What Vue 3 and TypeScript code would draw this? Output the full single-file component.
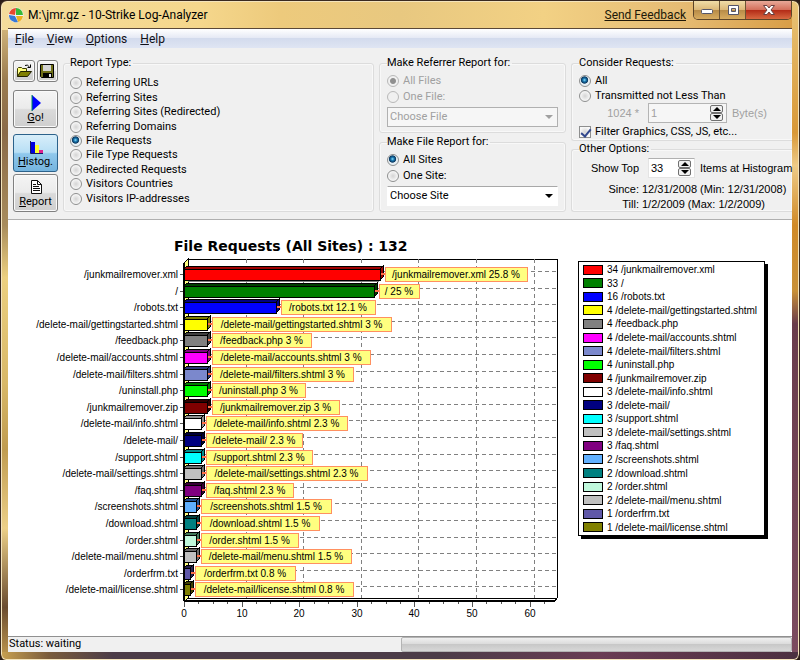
<script setup lang="ts">
import { ref } from 'vue'

interface Entry {
  path: string
  hits: number
  percent: string
  fill: string
  shade: string
  tagWidth: number
}

const entries: Entry[] = [
  { path: '/junkmailremover.xml', hits: 34, percent: '25.8', fill: '#ff0000', shade: '#a00000', tagWidth: 142 },
  { path: '/', hits: 33, percent: '25', fill: '#008000', shade: '#004000', tagWidth: 40 },
  { path: '/robots.txt', hits: 16, percent: '12.1', fill: '#0000ff', shade: '#000080', tagWidth: 94 },
  { path: '/delete-mail/gettingstarted.shtml', hits: 4, percent: '3', fill: '#ffff00', shade: '#808000', tagWidth: 179 },
  { path: '/feedback.php', hits: 4, percent: '3', fill: '#808080', shade: '#404040', tagWidth: 99 },
  { path: '/delete-mail/accounts.shtml', hits: 4, percent: '3', fill: '#ff00ff', shade: '#800080', tagWidth: 158 },
  { path: '/delete-mail/filters.shtml', hits: 4, percent: '3', fill: '#7b88cc', shade: '#2c3878', tagWidth: 141 },
  { path: '/uninstall.php', hits: 4, percent: '3', fill: '#00ff00', shade: '#008000', tagWidth: 93 },
  { path: '/junkmailremover.zip', hits: 4, percent: '3', fill: '#800000', shade: '#300000', tagWidth: 127 },
  { path: '/delete-mail/info.shtml', hits: 3, percent: '2.3', fill: '#ffffff', shade: '#909090', tagWidth: 141 },
  { path: '/delete-mail/', hits: 3, percent: '2.3', fill: '#000080', shade: '#000038', tagWidth: 96 },
  { path: '/support.shtml', hits: 3, percent: '2.3', fill: '#00ffff', shade: '#008c8c', tagWidth: 106 },
  { path: '/delete-mail/settings.shtml', hits: 3, percent: '2.3', fill: '#c0c0c0', shade: '#707070', tagWidth: 161 },
  { path: '/faq.shtml', hits: 3, percent: '2.3', fill: '#800080', shade: '#380038', tagWidth: 87 },
  { path: '/screenshots.shtml', hits: 2, percent: '1.5', fill: '#60b0ff', shade: '#204f90', tagWidth: 130 },
  { path: '/download.shtml', hits: 2, percent: '1.5', fill: '#008080', shade: '#004040', tagWidth: 118 },
  { path: '/order.shtml', hits: 2, percent: '1.5', fill: '#c0f8dc', shade: '#407858', tagWidth: 97 },
  { path: '/delete-mail/menu.shtml', hits: 2, percent: '1.5', fill: '#c0c0c0', shade: '#686868', tagWidth: 150 },
  { path: '/orderfrm.txt', hits: 1, percent: '0.8', fill: '#6058a8', shade: '#282050', tagWidth: 100 },
  { path: '/delete-mail/license.shtml', hits: 1, percent: '0.8', fill: '#808000', shade: '#404000', tagWidth: 158 },
]

const axisX = 176
const unit = 5.76
const firstRow = 54
const rowStep = 16.6

const bars = entries.map((e, i) => {
  const y = Math.round(firstRow + i * rowStep)
  const end = Math.round(axisX + e.hits * unit)
  return {
    ...e,
    y,
    end,
    top: `${axisX},${y - 5} ${axisX + 3},${y - 8} ${end + 3},${y - 8} ${end},${y - 5}`,
    side: `${end},${y - 5} ${end + 3},${y - 8} ${end + 3},${y + 3} ${end},${y + 6}`,
  }
})

const majors = [0, 10, 20, 30, 40, 50, 60].map((v) => ({ v, x: Math.round(axisX + v * unit) }))
const minors = Array.from({ length: 26 }, (_, i) => i)
  .filter((i) => i % 4 !== 0)
  .map((i) => Math.round(axisX + i * 2.5 * unit))

const reportTypes = [
  'Referring URLs',
  'Referring Sites',
  'Referring Sites (Redirected)',
  'Referring Domains',
  'File Requests',
  'File Type Requests',
  'Redirected Requests',
  'Visitors Countries',
  'Visitors IP-addresses',
]
const menus = ['File', 'View', 'Options', 'Help']

const reportType = ref('File Requests')
const referrerScope = ref('all')
const fileScope = ref('all')
const requestScope = ref('all')
const filterGraphics = ref(true)
const minBytes = ref(1)
const topCount = ref(33)
</script>

<template>
  <div class="window">
    <header class="titlebar">
      <svg class="logo" viewBox="0 0 16 16" aria-hidden="true">
        <circle cx="8" cy="8" r="7.5" fill="#f4f4f4" />
        <path d="M7 8L8 1A7 7 0 0 0 1 7Z" fill="#e84830" />
        <path d="M8 8V1A7 7 0 0 1 15 8Z" fill="#38b838" />
        <path d="M1 8L7 9L10 15A7 7 0 0 1 1 8Z" fill="#3878d8" />
        <path d="M8 9H15A7 7 0 0 1 10 15Z" fill="#f0b020" />
      </svg>
      <h1>M:\jmr.gz - 10-Strike Log-Analyzer</h1>
      <a class="feedback" href="#feedback">Send Feedback</a>
      <div class="captions">
        <button type="button" aria-label="Minimize">
          <svg viewBox="0 0 14 12"><rect x="1.5" y="5.5" width="11" height="4" rx="1" fill="#fff" stroke="#555568" /></svg>
        </button>
        <button type="button" aria-label="Maximize">
          <svg viewBox="0 0 14 12"><path d="M2.500 1.500h10v9h-10zM5.500 4.500v3h4v-3z" fill="#fff" fill-rule="evenodd" stroke="#555568" /></svg>
        </button>
        <button type="button" class="close" aria-label="Close">
          <svg viewBox="0 0 14 12"><path d="M1.500 1.500h3.500l2 2.500 2-2.500h3.500L9 6l3.500 4.500H9L7 8l-2 2.500H1.500L5 6z" fill="#fff" stroke="#6a4040" /></svg>
        </button>
      </div>
    </header>

    <div class="client">
      <nav class="menubar">
        <button v-for="m in menus" :key="m" type="button"><u>{{ m[0] }}</u>{{ m.slice(1) }}</button>
      </nav>

      <section class="toolbar">
        <div class="actions">
          <div class="pair">
            <button type="button" aria-label="Open">
              <svg viewBox="0 0 16 16">
                <path d="M1.500 13.500V5.500l1-1h3l1 1h4v3" fill="#ffff80" stroke="#3a3a00" />
                <path d="M1.500 13.500l3-5h11l-4 5z" fill="#808000" stroke="#202000" />
                <path d="M9 2.500q2.500-1.500 4.500 1.500M14.500 1.500v3h-3" fill="none" stroke="#000" />
              </svg>
            </button>
            <button type="button" aria-label="Save">
              <svg viewBox="0 0 16 16">
                <path d="M1.500 1.500h13v13h-12l-1-1z" fill="#707018" stroke="#000" />
                <rect x="4" y="2" width="8" height="6" fill="#d4d4d4" />
                <rect x="4" y="10" width="9" height="4" fill="#000" />
                <rect x="10" y="11" width="2" height="3" fill="#e8e8e8" />
              </svg>
            </button>
          </div>
          <button type="button" class="big go">
            <svg viewBox="0 0 16 16"><path d="M4 0v16l9-8z" fill="#0000ff" /><path d="M4 0v16" stroke="#009050" /></svg>
            <span><u>G</u>o!</span>
          </button>
          <button type="button" class="big active">
            <svg viewBox="0 0 16 16">
              <rect x="3" y="3" width="4" height="11" fill="#0000e0" />
              <rect x="7" y="6" width="4" height="8" fill="#ffff30" />
              <rect x="11" y="11" width="4" height="3" fill="#e02090" />
              <path d="M2.500 2v12.500H15" fill="none" stroke="#181860" />
            </svg>
            <span><u>H</u>istog.</span>
          </button>
          <button type="button" class="big">
            <svg viewBox="0 0 16 16">
              <path d="M3.500 1.500h6l4 4v9h-10z" fill="#fff" stroke="#111" />
              <path d="M9.500 1.500v4h4M5 5.500h3M5 7.500h6M5 9.500h7M5 11.500h7" fill="none" stroke="#111" />
            </svg>
            <span><u>R</u>eport</span>
          </button>
        </div>

        <fieldset class="types">
          <legend>Report Type:</legend>
          <label v-for="t in reportTypes" :key="t" class="option">
            <input v-model="reportType" type="radio" name="type" :value="t" />{{ t }}
          </label>
        </fieldset>

        <div class="column">
          <fieldset class="choice">
            <legend>Make Referrer Report for:</legend>
            <label class="option off"><input v-model="referrerScope" type="radio" name="referrer" value="all" disabled />All Files</label>
            <label class="option off"><input v-model="referrerScope" type="radio" name="referrer" value="one" disabled />One File:</label>
            <div class="combo off">
              <select aria-label="File" disabled><option>Choose File</option></select>
              <svg viewBox="0 0 8 4"><path d="M0 0h8L4 4z" fill="currentColor" /></svg>
            </div>
          </fieldset>
          <fieldset class="choice">
            <legend>Make File Report for:</legend>
            <label class="option"><input v-model="fileScope" type="radio" name="file" value="all" />All Sites</label>
            <label class="option"><input v-model="fileScope" type="radio" name="file" value="one" />One Site:</label>
            <div class="combo">
              <select aria-label="Site"><option>Choose Site</option></select>
              <svg viewBox="0 0 8 4"><path d="M0 0h8L4 4z" fill="currentColor" /></svg>
            </div>
          </fieldset>
        </div>

        <div class="column last">
          <fieldset class="requests">
            <legend>Consider Requests:</legend>
            <label class="option"><input v-model="requestScope" type="radio" name="requests" value="all" />All</label>
            <label class="option"><input v-model="requestScope" type="radio" name="requests" value="min" />Transmitted not Less Than</label>
            <div class="line off">
              <label class="lead" for="bytes">1024 *</label>
              <div class="spin wide">
                <input id="bytes" v-model="minBytes" type="number" disabled />
                <span class="steps">
                  <button type="button" aria-label="More bytes" disabled><svg viewBox="0 0 8 4"><path d="M4 0l4 4H0z" /></svg></button>
                  <button type="button" aria-label="Fewer bytes" disabled><svg viewBox="0 0 8 4"><path d="M0 0h8L4 4z" /></svg></button>
                </span>
              </div>
              <span>Byte(s)</span>
            </div>
            <label class="option check"><input v-model="filterGraphics" type="checkbox" />Filter Graphics, CSS, JS, etc...</label>
          </fieldset>
          <fieldset class="others">
            <legend>Other Options:</legend>
            <div class="line">
              <label class="lead" for="top">Show Top</label>
              <div class="spin">
                <input id="top" v-model="topCount" type="number" />
                <span class="steps">
                  <button type="button" aria-label="More items" @click="topCount++"><svg viewBox="0 0 8 4"><path d="M4 0l4 4H0z" /></svg></button>
                  <button type="button" aria-label="Fewer items" @click="topCount--"><svg viewBox="0 0 8 4"><path d="M0 0h8L4 4z" /></svg></button>
                </span>
              </div>
              <span>Items at Histogram</span>
            </div>
            <dl class="dates">
              <dt>Since:</dt><dd>12/31/2008 (Min: 12/31/2008)</dd>
              <dt>Till:</dt><dd>1/2/2009 (Max: 1/2/2009)</dd>
            </dl>
          </fieldset>
        </div>
      </section>

      <main class="report">
        <svg class="chart" viewBox="0 0 570 416" role="img" aria-label="File requests histogram">
          <text class="heading" x="166" y="31">File Requests (All Sites) : 132</text>
          <g shape-rendering="crispEdges">
            <path d="M180 39H549V378" fill="none" stroke="#000" />
            <g stroke="#808080" stroke-dasharray="4 3">
              <path v-for="b in bars" :key="b.path" :d="`M180 ${b.y - 3}H549`" />
              <path v-for="m in majors.slice(1)" :key="m.v" :d="`M${m.x + 4} 39V378`" />
            </g>
            <path d="M176 43l4-4V378l-4 4z" fill="#ffff80" stroke="#000" />
            <path d="M176 43V381M176 381H547" fill="none" stroke="#000" stroke-width="2" />
            <path d="M180 378H549L547 381" fill="none" stroke="#000" />
            <path d="M180 61H371" stroke="#808080" stroke-width="2" />
            <g stroke="#555">
              <path v-for="b in bars" :key="b.path" :d="`M172 ${b.y}h3`" />
              <path v-for="m in majors" :key="m.v" :d="`M${m.x} 382v5`" />
              <path v-for="x in minors" :key="x" :d="`M${x} 382v2`" />
            </g>
          </g>
          <text v-for="m in majors" :key="m.v" class="tick" :x="m.x" y="397">{{ m.v }}</text>
          <g v-for="b in bars" :key="b.path">
            <text class="name" x="170" :y="b.y + 4">{{ b.path }}</text>
            <g stroke="#000" shape-rendering="crispEdges">
              <polygon :points="b.top" :fill="b.shade" />
              <polygon :points="b.side" :fill="b.shade" />
              <rect :x="axisX" :y="b.y - 5" :width="b.end - axisX" height="11" :fill="b.fill" />
            </g>
            <path :d="`M${b.end + 1} ${b.y}h4`" stroke="#ff7048" stroke-width="2" />
            <rect :x="b.end + 5" :y="b.y - 7" :width="b.tagWidth" height="14" fill="#ffff80" stroke="#ff9060" shape-rendering="crispEdges" />
            <text class="tick" :x="b.end + 5 + b.tagWidth / 2" :y="b.y + 4">{{ b.path }} {{ b.percent }} %</text>
          </g>
        </svg>
        <ul class="key">
          <li v-for="e in entries" :key="e.path">
            <span class="swatch" :style="{ backgroundColor: e.fill }"></span>{{ e.hits }} {{ e.path }}
          </li>
        </ul>
      </main>

      <footer class="status">
        <span>Status: waiting</span>
        <span class="gauge"></span>
      </footer>
    </div>
  </div>
</template>

<style>
html,
body {
  margin: 0;
  background: #2a1c18;
}
</style>

<style scoped>
* {
  box-sizing: border-box;
}

.window {
  display: flex;
  flex-direction: column;
  min-height: 100vh;
  padding: 0 7px 8px;
  border: 1px solid #3a2a20;
  border-width: 1px 1px 0;
  border-radius: 7px 7px 6px 6px;
  box-shadow: inset 0 0 0 1px #f4e4bc;
  background:
    linear-gradient(90deg, #c8a050 0, #7a5c3c 6%, #4c3c48 14%, #4c3c48 55%, #6a3c54 75%, #4c3040) bottom / 100% 8px no-repeat,
    linear-gradient(#e8c478 0, #d89838 20%, #eecb88 25%, #d08a28 34%, #c89038 44%, #6a3c4c 49%, #7c4c60) right / 7px 100% no-repeat,
    linear-gradient(90deg, #f4dc9c, #f5d78c 25%, #edca7c 35%, #e8c880 50%, #f2d184 68%, #e6bc74 85%, #d89c44) top / 100% 29px no-repeat,
    linear-gradient(#ecd090 0, #9a7c50 12%, #8a6a48 20%, #a88c5c 34%, #ecd080 42%, #d8b868 58%, #c09c50 68%, #ecd088 80%, #6a4c30 92%, #c49c50);
  font: 11px/14px Roboto, "Liberation Sans", Arial, sans-serif;
  color: #000;
}

.titlebar {
  display: flex;
  align-items: center;
  height: 27px;
  font-size: 12px;
}

.logo {
  width: 16px;
  height: 16px;
}

h1 {
  flex: 1;
  margin: 0 0 0 4px;
  font: inherit;
}

.feedback {
  margin-right: 7px;
  color: #201808;
}

.captions {
  display: flex;
  align-self: flex-start;
  border: 1px solid #5c4428;
  border-top: 0;
  border-radius: 0 0 5px 5px;
  overflow: hidden;
}

.captions button {
  display: grid;
  place-items: center;
  width: 26px;
  height: 18px;
  padding: 0;
  border: 0;
  border-right: 1px solid #6c5434;
  background: linear-gradient(#f0dca8, #dcb878 48%, #b88c48 52%, #d8ac60);
}

.captions .close {
  width: 45px;
  border-right: 0;
  background: linear-gradient(#e8a898, #d4705c 48%, #b42c18 52%, #d86840);
}

.captions svg {
  width: 14px;
  height: 12px;
}

.client {
  display: flex;
  flex: 1;
  flex-direction: column;
  border-top: 1px solid #5a4838;
  background: #fff;
}

.menubar {
  display: flex;
  gap: 13px;
  height: 19px;
  padding: 0 7px;
  background: linear-gradient(#fff, #e6eaf5 45%, #d3dbed 50%, #dfe5f3);
}

.menubar button {
  padding: 0;
  border: 0;
  background: none;
  font: inherit;
  font-size: 12px;
  color: #101018;
}

.toolbar {
  display: grid;
  grid-template-columns: 45px minmax(180px, 1fr) 187px 221px;
  gap: 5px;
  padding: 8px 0 7px 5px;
  border-bottom: 1px solid #b0b0b0;
  background: #f0f0f0;
}

.actions {
  display: flex;
  flex-direction: column;
  gap: 2px;
  padding-top: 4px;
}

.pair {
  display: grid;
  grid-template-columns: 1fr 1fr;
  gap: 2px;
  height: 22px;
  margin-bottom: 6px;
}

.actions button {
  display: flex;
  flex-direction: column;
  align-items: center;
  justify-content: center;
  padding: 0;
  border: 1px solid #808080;
  border-radius: 3px;
  background: linear-gradient(#f4f4f4, #ebebeb 48%, #dadada 52%, #cfcfcf);
  box-shadow: inset 0 0 0 1px #fafafa;
  font: inherit;
}

.actions .big {
  height: 38px;
  padding-top: 2px;
}

.actions .go {
  margin-bottom: 4px;
}

.actions svg {
  width: 16px;
  height: 16px;
}

.actions .active {
  border-color: #2c628b;
  background: linear-gradient(#d8eefa, #b8dff5 48%, #90c8ec 52%, #74b4de);
  box-shadow: none;
}

fieldset {
  display: flex;
  flex-direction: column;
  min-width: 0;
  margin: 0;
  padding: 0 6px;
  border: 1px solid #dcdcdc;
  border-radius: 3px;
  box-shadow: inset 0 0 0 1px #f8f8f8;
}

legend {
  height: 14px;
  padding: 0 2px 0 0;
}

.types {
  padding: 6px 6px 5px;
}

.types .option {
  flex: 1;
}

.column {
  display: flex;
  flex-direction: column;
  justify-content: space-between;
}

.option {
  display: flex;
  align-items: center;
  gap: 4px;
}

input[type='radio'],
input[type='checkbox'] {
  appearance: none;
  flex: none;
  width: 12px;
  height: 12px;
  margin: 0;
  border: 1px solid #8e8f8f;
  border-radius: 50%;
  background: radial-gradient(circle, #d4d4d4, #f8f8f8 70%);
}

input[type='radio']:checked {
  background: radial-gradient(circle at 45% 40%, #8fe0fc 0, #1a78b0 20%, #0c3860 40%, #e8f0f4 50%);
}

input[type='radio']:disabled {
  border-color: #b8b8b8;
  background: #f0f0f0;
}

input[type='radio']:checked:disabled {
  background: radial-gradient(circle, #909090 35%, #f0f0f0 50%);
}

input[type='checkbox'] {
  border-radius: 0;
}

input[type='checkbox']:checked::before {
  content: '';
  display: block;
  width: 4px;
  height: 8px;
  margin-left: 3px;
  border: solid #31478c;
  border-width: 0 2px 2px 0;
  transform: rotate(40deg);
}

.off {
  color: #a0a0a0;
}

.choice {
  height: 77px;
  padding: 3px 7px 4px;
}

.choice .option {
  height: 16px;
}

.combo {
  display: grid;
  grid-template-columns: 1fr 13px;
  align-items: center;
  height: 20px;
  margin-top: 2px;
}

.combo select {
  grid-area: 1 / 1 / 2 / 3;
  appearance: none;
  width: 100%;
  height: 20px;
  padding: 0 2px;
  border: 1px solid #fff;
  border-top-color: #a8a8a8;
  border-radius: 0;
  background: #fff;
  font: inherit;
  color: inherit;
  opacity: 1;
}

.combo.off select {
  border-color: #b0b0b0;
  background: #f6f6f6;
}

.combo svg {
  grid-area: 1 / 2;
  width: 8px;
  height: 4px;
  pointer-events: none;
}

.last fieldset {
  border-right: 0;
  border-radius: 3px 0 0 3px;
}

.requests {
  height: 85px;
  padding: 3px 0 0 7px;
}

.requests .option {
  height: 15px;
}

.requests .check {
  height: 14px;
  margin-top: 2px;
}

.line,
.dates {
  font-family: "Liberation Sans", Arial, sans-serif;
  white-space: nowrap;
}

.line {
  display: grid;
  grid-template-columns: 64px auto 1fr;
  column-gap: 5px;
  align-items: center;
  height: 20px;
}

.lead {
  padding-right: 4px;
  text-align: right;
}

.spin {
  display: flex;
  align-items: center;
  width: 47px;
  height: 20px;
  padding: 0 3px 0 2px;
  border: 1px solid #e4e4e4;
  border-top-color: #b0b0b0;
  background: #fff;
}

.spin.wide {
  width: 79px;
  border-color: #b4b4b4;
  background: #f6f6f6;
}

.spin input {
  flex: 1;
  appearance: textfield;
  min-width: 0;
  padding: 0;
  border: 0;
  background: none;
  font: inherit;
  color: inherit;
}

.spin input::-webkit-inner-spin-button {
  appearance: none;
  margin: 0;
}

.steps {
  display: grid;
}

.steps button {
  display: grid;
  place-items: center;
  width: 13px;
  height: 8px;
  padding: 0;
  border: 1px solid #707070;
  border-radius: 2px;
  background: #f0f0f0;
}

.steps svg {
  width: 8px;
  height: 4px;
}

.others {
  height: 70px;
  padding: 2px 0 0 7px;
}

.dates {
  display: grid;
  grid-template-columns: 60px 1fr;
  column-gap: 3px;
  row-gap: 1px;
  margin: 4px 0 0;
}

.dates dt {
  text-align: right;
}

.dates dd {
  margin: 0;
}

.report {
  display: flex;
  flex: 1;
  align-items: flex-start;
  padding-right: 27px;
  font: 10px/13px "Liberation Sans", Arial, sans-serif;
}

.chart {
  flex: 1;
  min-width: 0;
  fill: #000;
}

.heading {
  font: bold 14px "DejaVu Sans", Verdana, sans-serif;
}

.name {
  text-anchor: end;
}

.tick {
  text-anchor: middle;
}

.key {
  display: grid;
  grid-auto-rows: 1fr;
  width: 187px;
  height: 275px;
  margin: 41px 0 0;
  padding: 1px 4px;
  border: 1px solid #000;
  box-shadow: 3px 3px 0 #000;
  list-style: none;
}

.key li {
  display: flex;
  align-items: center;
  gap: 4px;
  min-height: 0;
  white-space: nowrap;
}

.swatch {
  width: 20px;
  height: 10px;
  border: 1px solid #000;
}

.status {
  display: grid;
  grid-template-columns: 1fr 1fr;
  height: 16px;
  padding-left: 1px;
  border-top: 1px solid #909090;
  background: #f0f0f0;
}

.gauge {
  border: 1px solid #b4b4b4;
  border-radius: 2px;
  background: linear-gradient(#f0f0f0, #dcdcdc 45%, #c8c8c8 50%, #d8d8d8);
}
</style>
